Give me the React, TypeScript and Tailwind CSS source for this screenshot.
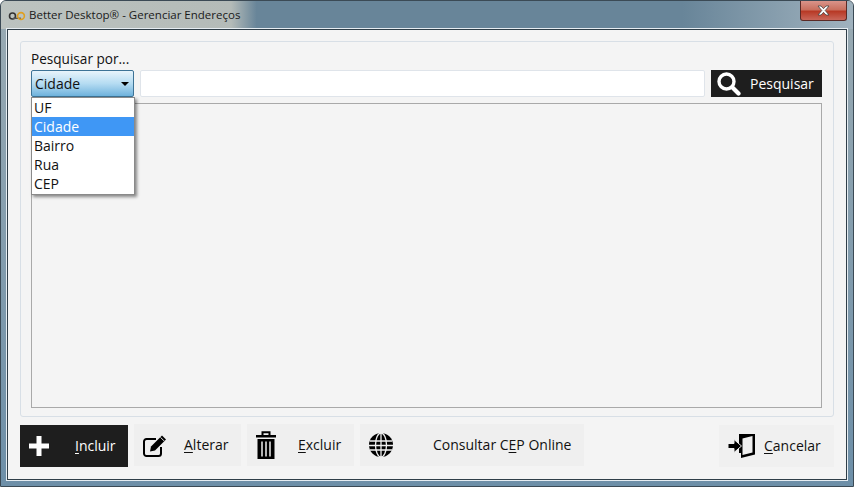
const font = "font-['Open_Sans',sans-serif]";

function Key({ children }: { children: string }) {
  return <span className="underline underline-offset-2">{children}</span>;
}

function SearchIcon() {
  return (
    <svg width="24" height="24" viewBox="0 0 24 24" className="shrink-0">
      <circle cx="9.5" cy="9.5" r="7.5" fill="none" stroke="#fff" strokeWidth="3.4" />
      <path d="M15.5 15.5 L21.5 21.5" stroke="#fff" strokeWidth="4.2" strokeLinecap="round" />
    </svg>
  );
}

function PlusIcon() {
  return (
    <svg width="20" height="20" viewBox="0 0 20 20" className="shrink-0">
      <path d="M7.5 0h5v7.5H20v5h-7.5V20h-5v-7.5H0v-5h7.5z" fill="#fff" />
    </svg>
  );
}

function EditIcon() {
  return (
    <svg width="24" height="23" viewBox="0 0 24 23" className="shrink-0">
      <path d="M13 5H3.5A2.5 2.5 0 0 0 1 7.5v12A2.5 2.5 0 0 0 3.5 22h12a2.5 2.5 0 0 0 2.5-2.5V13" fill="none" stroke="#000" strokeWidth="2" />
      <path d="M8 12.5 19 1.5l4 4L12 16.5l-5 1z" fill="#000" />
      <path d="M17.6 3.4l3.5 3.5" stroke="#efefef" strokeWidth="1" />
    </svg>
  );
}

function TrashIcon() {
  return (
    <svg width="20" height="28" viewBox="0 0 20 28" className="shrink-0">
      <path d="M6.5 4V1.2h7V4" fill="none" stroke="#000" strokeWidth="2" />
      <rect x="0" y="4" width="20" height="2.5" fill="#000" />
      <path d="M1.5 8h17v20h-17z" fill="#000" />
      <path d="M6 10.5v15M10 10.5v15M14 10.5v15" stroke="#efefef" strokeWidth="1.5" />
    </svg>
  );
}

function GlobeIcon() {
  return (
    <svg width="24" height="24" viewBox="0 0 24 24" className="shrink-0">
      <circle cx="12" cy="12" r="12" fill="#000" />
      <g fill="none" stroke="#efefef" strokeWidth="1.3">
        <ellipse cx="12" cy="12" rx="5.5" ry="12" />
        <path d="M12 0v24M1 8h22M0 12.5h24M1 17h22" />
      </g>
    </svg>
  );
}

function DoorIcon() {
  return (
    <svg width="27" height="24" viewBox="0 0 27 24" className="shrink-0">
      <path d="M11 0H27V20.5L13 24V19H11Z" fill="#000" />
      <path d="M14.5 4.5 24.5 2V18.5L14.5 21Z" fill="#f0f0f0" />
      <path d="M0 9.5h6V5.5l7.5 6.5-7.5 6.5v-4H0z" fill="#000" stroke="#f0f0f0" strokeWidth="1" />
    </svg>
  );
}

export default function App() {
  return (
    <div className={`${font} relative flex h-[487px] w-[854px] flex-col overflow-hidden rounded-t-md border border-[#3b4a55] bg-gradient-to-b from-[#9aabb3] to-[#6d8fa8] text-[14px] text-[#111]`}>
      <div className="flex h-[28px] shrink-0 items-center bg-[linear-gradient(90deg,#bcc3c0_0%,#b4bbb8_27%,#688599_30%,#688599_80%,#a0b2be_100%)] pl-[7px] pr-[7px]">
        <svg width="18" height="10" viewBox="0 0 18 10" className="mr-[3px] mt-px">
          <circle cx="4.5" cy="5" r="3" fill="none" stroke="#333" strokeWidth="1.6" />
          <rect x="5" y="6.6" width="8" height="1.4" fill="#555" />
          <circle cx="13" cy="5" r="3.4" fill="none" stroke="#e0a020" strokeWidth="1.6" />
        </svg>
        <span className="text-[11.5px] text-[#1a1a1a]">Better Desktop® - Gerenciar Endereços</span>
        <div className="mb-auto ml-auto mr-[-1px] flex h-[20px] w-[47px] items-center justify-center rounded-b-[3px] border border-t-0 border-[#5a2a26] bg-[linear-gradient(180deg,#d9948a_0%,#c9705f_45%,#b83a26_55%,#c9675a_100%)]">
          <svg width="15" height="11" viewBox="0 0 15 11">
            <path d="M2 1h3l2.5 2.7L10 1h3L9.2 5.5 13 10h-3L7.5 7.3 5 10H2l3.8-4.5z" fill="#fff" stroke="#444" strokeWidth="0.8" />
          </svg>
        </div>
      </div>

      <div className="mx-[6px] mb-[6px] flex min-h-0 flex-1 flex-col border border-[#2f3e48] bg-[#f4f4f4] px-[12px] pt-[11px] outline outline-1 outline-[#e6edf2]">
        <div className="flex h-[376px] shrink-0 flex-col rounded-[3px] border border-[#d8dfe6] pl-[10px] pr-[11px] pt-[7px]">
          <div className="h-[21px] text-[13.6px] leading-[20px]">Pesquisar por...</div>
          <div className="flex h-[27px] gap-[6px]">
            <div className="flex w-[103px] items-center justify-between rounded-[2px] border border-[#3d7396] bg-gradient-to-b from-[#e8f4fb] via-[#b5dcf2] to-[#6eb2dc] pl-[3px] pr-[3px]">
              <span>Cidade</span>
              <span className="mr-[1px] h-0 w-0 border-x-[4px] border-t-[4px] border-x-transparent border-t-black" />
            </div>
            <div className="flex-1 rounded-[2px] border border-[#dfe4ea] bg-white" />
            <div className="flex w-[111px] items-center bg-[#1e1e1e] pl-[6px] text-white">
              <SearchIcon />
              <span className="ml-[9px]">Pesquisar</span>
            </div>
          </div>
          <div className="mt-[6px] h-[305px] border border-[#a9a9a9]" />
        </div>

        <div className="mt-[7px] flex items-start gap-[6px]">
          <div className="mt-px flex h-[42px] w-[108px] items-center bg-[#1e1e1e] pl-[9px] text-white">
            <PlusIcon />
            <span className="mb-[2px] ml-[26px]"><Key>I</Key>ncluir</span>
          </div>
          <div className="flex h-[42px] w-[107px] items-center bg-[#efefef] pl-[9px]">
            <EditIcon />
            <span className="mb-[2px] ml-[17px]"><Key>A</Key>lterar</span>
          </div>
          <div className="flex h-[42px] w-[107px] items-center bg-[#efefef] pl-[9px]">
            <TrashIcon />
            <span className="mb-[2px] ml-[22px]"><Key>E</Key>xcluir</span>
          </div>
          <div className="flex h-[42px] w-[224px] items-center bg-[#efefef] pl-[9px]">
            <GlobeIcon />
            <span className="mb-[2px] ml-[40px]">Consultar C<Key>E</Key>P Online</span>
          </div>
          <div className="ml-auto mt-px flex h-[42px] w-[115px] items-center bg-[#f0f0f0] pl-[9px]">
            <DoorIcon />
            <span className="mb-[2px] ml-[9px]"><Key>C</Key>ancelar</span>
          </div>
        </div>
      </div>

      <div className="absolute left-[30px] top-[96px] flex h-[98px] w-[104px] flex-col border border-[#8a8a8a] bg-white text-[14px] leading-[19px] shadow-[2px_2px_3px_rgba(0,0,0,0.45)]">
        <div className="pl-[2px]">UF</div>
        <div className="bg-[#3f97f5] pl-[2px] text-white">Cidade</div>
        <div className="pl-[2px]">Bairro</div>
        <div className="pl-[2px]">Rua</div>
        <div className="pl-[2px]">CEP</div>
      </div>
    </div>
  );
}
